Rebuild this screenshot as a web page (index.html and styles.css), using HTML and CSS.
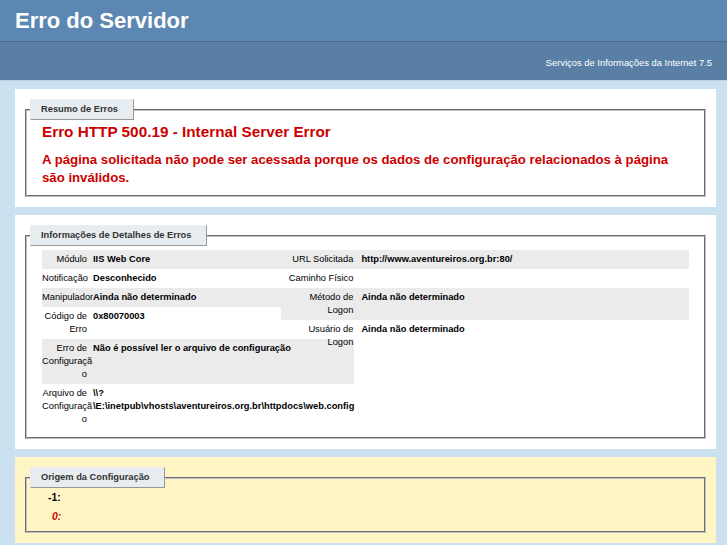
FILE: index.html
```html
<!DOCTYPE html>
<html lang="pt-BR">
<head>
<meta charset="utf-8">
<title>IIS 7.5 Erro Detalhado - 500.19 - Internal Server Error</title>
<link rel="stylesheet" href="styles.css">
</head>
<body>
<div class="header"><h1 class="title">Erro do Servidor</h1></div>
<div class="server-version"><p>Serviços de Informações da Internet 7.5</p></div>
<div class="content">
  <div class="container">
    <fieldset class="group summary">
      <legend class="legend">Resumo de Erros</legend>
      <h2 class="error-title">Erro HTTP 500.19 - Internal Server Error</h2>
      <h3 class="error-desc">A página solicitada não pode ser acessada porque os dados de configuração relacionados à página são inválidos.</h3>
    </fieldset>
  </div>
  <div class="container">
    <fieldset class="group detail-group">
      <legend class="legend">Informações de Detalhes de Erros</legend>
      <div class="details">
        <table class="info info-left">
          <tbody>
            <tr class="alt"><th>Módulo</th><td>IIS Web Core</td></tr>
            <tr><th>Notificação</th><td>Desconhecido</td></tr>
            <tr class="alt"><th>Manipulador</th><td>Ainda não determinado</td></tr>
            <tr><th>Código de Erro</th><td>0x80070003</td></tr>
            <tr class="alt"><th>Erro de Configuraçã<wbr>o</th><td>Não é possível ler o arquivo de configuração</td></tr>
            <tr><th>Arquivo de Configuraçã<wbr>o</th><td>\\?<wbr><span class="nowrap">\E:\inetpub\vhosts\aventureiros.org.br\httpdocs\web.config</span></td></tr>
          </tbody>
        </table>
        <table class="info info-right">
          <tbody>
            <tr class="alt"><th>URL Solicitada</th><td>http://www.aventureiros.org.br:80/</td></tr>
            <tr><th>Caminho Físico</th><td></td></tr>
            <tr class="alt"><th>Método de Logon</th><td>Ainda não determinado</td></tr>
            <tr><th>Usuário de Logon</th><td>Ainda não determinado</td></tr>
          </tbody>
        </table>
      </div>
    </fieldset>
  </div>
  <div class="container config">
    <fieldset class="group source-group">
      <legend class="legend">Origem da Configuração</legend>
      <div class="source">
        <code class="source-line">-1:</code>
        <code class="source-line current highlight">0:</code>
      </div>
    </fieldset>
  </div>
</div>
</body>
</html>
```
FILE: styles.css
```css
html, body {
  margin: 0;
}
body {
  background: #CBE1EF;
  font-family: "Liberation Sans", Arial, Helvetica, sans-serif;
  font-size: 9.3px;
  line-height: 13px;
  color: #000;
}
.header {
  background: #5C87B2;
  padding: 6px 15px;
  color: #fff;
}
.title {
  margin: 0;
  font-size: 22px;
  line-height: 29px;
  font-weight: bold;
}
.server-version {
  background: #5A7FA5;
  border-top: 1px solid #4A6C8E;
  border-bottom: 1px solid #C1CFDD;
  color: #fff;
  text-align: right;
  padding: 15px 15px 12px;
}
.server-version p {
  margin: 0;
  font-size: 9.4px;
  line-height: 11px;
}
.content {
  margin: 8px 11px 0 15px;
  display: flex;
  flex-direction: column;
  gap: 8px;
}
.container {
  background: #fff;
  padding: 10px;
}
.container.config {
  background: #FFF5C4;
}
.group {
  margin: 0;
  border: 2px groove #c0c0c0;
  padding: 0 15px 8px;
  min-width: 0;
}
.source-group {
  padding-bottom: 5px;
}
.legend {
  color: #333;
  font-weight: bold;
  font-size: 9.3px;
  line-height: 11px;
  padding: 4px 15px 4px 10px;
  margin: 0 0 0 -12px;
  border-top: 1px solid #EDEDED;
  border-left: 1px solid #EDEDED;
  border-right: 1px solid #969696;
  border-bottom: 1px solid #969696;
  background: #E7ECF0;
}
.error-title {
  margin: 1px 0 0;
  font-size: 15.3px;
  line-height: 21px;
  color: #CC0000;
  font-weight: bold;
}
.error-desc {
  margin: 9px 0 0;
  font-size: 13.2px;
  line-height: 18px;
  color: #CC0000;
  font-weight: bold;
}
.details {
  display: grid;
  grid-template-columns: 35% 63%;
  column-gap: 2%;
  align-items: start;
}
.info {
  display: grid;
  margin: 4px 0 0;
  border: none;
  border-spacing: 0;
  min-width: 0;
}
.info-left {
  grid-template-columns: 51px auto;
}
.info-right {
  grid-template-columns: 80px 1fr;
}
.info tbody, .info tr {
  display: contents;
}
.info th, .info td {
  padding: 3px 0;
  vertical-align: top;
  text-align: left;
}
.info th {
  text-align: right;
  font-weight: normal;
  padding-right: 6px;
}
.info-right th {
  padding-right: 8px;
}
.info td {
  font-weight: bold;
}
.info tr.alt th, .info tr.alt td {
  background: #EBEBEB;
}
.nowrap {
  white-space: nowrap;
}
.source {
  display: flex;
  flex-direction: column;
  align-items: flex-start;
}
.source-line {
  display: block;
  font-family: "Liberation Sans", Arial, Helvetica, sans-serif;
  font-size: 10.4px;
  line-height: 19px;
  font-weight: bold;
  color: #000;
  padding-left: 6px;
}
.source-line.current {
  padding-left: 10px;
}
.highlight {
  color: #CC0000;
  font-style: italic;
}
```
